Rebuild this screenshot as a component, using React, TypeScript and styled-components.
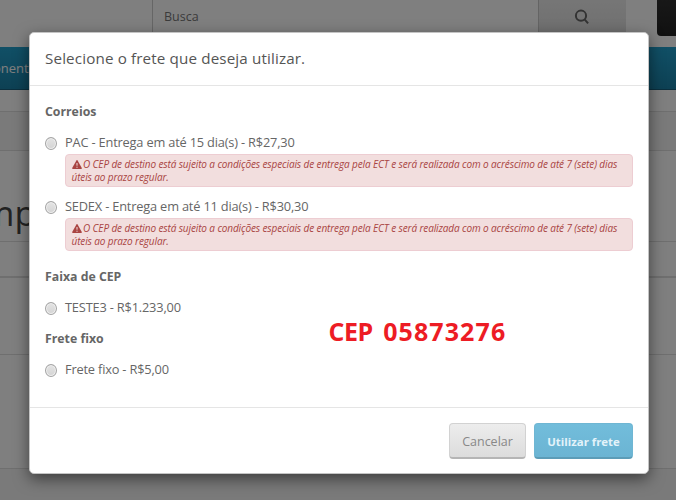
import React from 'react';
import styled, { createGlobalStyle } from 'styled-components';

const GlobalStyle = createGlobalStyle`
  * { box-sizing: border-box; }
  body { margin: 0; overflow: hidden; font-family: 'Open Sans', sans-serif; color: #666; }
`;

const Page = styled.div`
  position: relative;
  height: 500px;
  overflow: hidden;
  background: #fff;
`;

const TopBar = styled.div`
  display: flex;
  height: 47px;
  padding-left: 152px;
`;

const SearchField = styled.div`
  flex: none;
  width: 386px;
  height: 36px;
  padding: 7px 0 0 11px;
  border-left: 1px solid #ccc;
  font-size: 12.5px;
  line-height: 19px;
  color: #777;
`;

const SearchButton = styled.div`
  flex: none;
  width: 88px;
  height: 36px;
  padding: 9px 0 0 35px;
  border-left: 1px solid #c8c8c8;
  background: linear-gradient(#ededed, #dedede);
  line-height: 0;
`;

const CartButton = styled.div`
  flex: none;
  width: 50px;
  height: 36px;
  margin-left: 31px;
  border-radius: 0 0 0 4px;
  background: linear-gradient(#303030, #222);
`;

const Nav = styled.div`
  height: 43px;
  border-bottom: 1px solid #175f7c;
  background: linear-gradient(#22a0cd, #1b82a8);
  color: #fff;
  font-size: 13px;
  line-height: 43px;
`;

const NavLabel = styled.span`
  display: block;
  width: 29px;
  margin-left: -7px;
  white-space: nowrap;
`;

const Band = styled.div<{ $height: number; $shade?: string; $line?: number }>`
  height: ${p => p.$height}px;
  overflow: hidden;
  background: ${p => p.$shade ?? '#fff'};
  border-bottom: ${p => p.$line ?? 1}px solid #dedede;
`;

const PageTitle = styled.h1`
  margin: 39px 0 0 -18px;
  font-size: 35px;
  line-height: 46px;
  font-weight: 400;
  color: #444;
`;

const Backdrop = styled.div`
  position: absolute;
  inset: 0;
  background: rgba(0, 0, 0, 0.5);
`;

const Modal = styled.div`
  position: absolute;
  left: 29px;
  top: 32px;
  width: 620px;
  height: 442px;
  display: flex;
  flex-direction: column;
  border: 1px solid #c4c4c4;
  border-radius: 5px;
  background: #fff;
  box-shadow: 0 5px 15px rgba(0, 0, 0, 0.5);
`;

const ModalHeader = styled.header`
  height: 53px;
  padding: 14px 15px 0;
  border-bottom: 1px solid #e5e5e5;
`;

const ModalTitle = styled.h4`
  margin: 0;
  font-size: 15.2px;
  line-height: 22px;
  font-weight: 400;
  letter-spacing: 0.14px;
  color: #555;
`;

const ModalBody = styled.div`
  position: relative;
  height: 321px;
  padding: 16px 15px 0;
`;

const Group = styled.section<{ $height: number }>`
  height: ${p => p.$height}px;
`;

const GroupTitle = styled.div`
  height: 30px;
  font-size: 12.3px;
  line-height: 20px;
  font-weight: 700;
`;

const Option = styled.div<{ $height?: number }>`
  height: ${p => p.$height ?? 31}px;
`;

const OptionLabel = styled.label`
  display: flex;
  height: 20px;
  font-size: 12.8px;
  line-height: 20px;
  white-space: nowrap;
`;

const Radio = styled.span`
  flex: none;
  width: 12px;
  height: 13px;
  margin: 5px 8px 0 0;
  border: 1px solid #a4a4a4;
  border-radius: 50%;
  background: linear-gradient(#e4e4e4, #d4d4d4);
  box-shadow: inset 0 0 0 1px #eee;
`;

const Warning = styled.div`
  width: 568px;
  height: 33px;
  margin: 2px 0 0 20px;
  padding: 3px 5.5px 0;
  border: 1px solid #edcdd2;
  border-radius: 4px;
  background: #f2dede;
  color: #a94442;
  font-size: 10px;
  line-height: 12.5px;
  font-style: italic;
  white-space: nowrap;
`;

const WarningLine = styled.div`
  display: flex;
  align-items: center;
  gap: 1.5px;
  height: 12.5px;
`;

const Fit = styled.span<{ $spacing: number }>`
  letter-spacing: ${p => p.$spacing}px;
`;

const Annotation = styled.div`
  position: absolute;
  left: 298.5px;
  top: 228px;
  display: flex;
  gap: 10.5px;
  font-size: 25px;
  line-height: 34px;
  font-weight: 700;
  color: #ed1c24;
  white-space: nowrap;
`;

const ModalFooter = styled.footer`
  display: flex;
  flex: 1;
  justify-content: flex-end;
  gap: 8px;
  padding: 15px 15px 0;
  border-top: 1px solid #e5e5e5;
`;

const Button = styled.button<{ $primary?: boolean }>`
  width: ${p => (p.$primary ? 99 : 77)}px;
  height: 36px;
  padding: 1px 0 0;
  border: 1px solid ${p => (p.$primary ? '#6fb6d3' : '#d2d2d2')};
  border-bottom: 2px solid ${p => (p.$primary ? '#5c9cb7' : '#b5b5b5')};
  border-radius: 4px;
  background: ${p => (p.$primary ? 'linear-gradient(#72bddb, #6bb4d3)' : 'linear-gradient(#ededed, #dcdcdc)')};
  color: ${p => (p.$primary ? '#e3f3fa' : '#888')};
  font-family: 'Open Sans', sans-serif;
  font-size: ${p => (p.$primary ? 11.4 : 12.5)}px;
  font-weight: ${p => (p.$primary ? 700 : 400)};
  white-space: nowrap;
`;

const WarningIcon = () => (
  <svg width="10" height="9" viewBox="0 0 10 9">
    <path d="M4.4.5Q5-.4 5.6.5L9.8 8Q10 9 9.2 9H.8Q0 9 .2 8Z" fill="#a94442" />
    <path d="M5 3v2.7M5 6.7v1.1" stroke="#f2dede" strokeWidth="1" />
  </svg>
);

const DeliveryWarning = () => (
  <Warning>
    <WarningLine>
      <WarningIcon />
      <Fit $spacing={-0.115}>
        O CEP de destino está sujeito a condições especiais de entrega pela ECT e será realizada com o acréscimo de até 7 (sete) dias
      </Fit>
    </WarningLine>
    <WarningLine>
      <Fit $spacing={-0.12}>úteis ao prazo regular.</Fit>
    </WarningLine>
  </Warning>
);

const ShippingOption = ({ label, height, warned }: { label: string; height?: number; warned?: boolean }) => (
  <Option $height={height}>
    <OptionLabel>
      <Radio />
      <Fit $spacing={-0.18}>{label}</Fit>
    </OptionLabel>
    {warned && <DeliveryWarning />}
  </Option>
);

export default function App() {
  return (
    <Page>
      <GlobalStyle />
      <TopBar>
        <SearchField>Busca</SearchField>
        <SearchButton>
          <svg width="16" height="16" viewBox="0 0 16 16" fill="none" stroke="#666" strokeWidth="2">
            <circle cx="7" cy="6.7" r="5.1" />
            <path d="m10.8 10.6 3.3 3.7" />
          </svg>
        </SearchButton>
        <CartButton />
      </TopBar>
      <Nav><NavLabel>onentes</NavLabel></Nav>
      <Band $height={22} />
      <Band $height={39} $shade="#f5f5f5" />
      <Band $height={91}><PageTitle>mp</PageTitle></Band>
      <Band $height={36} $line={2} />
      <Band $height={77} />
      <Band $height={114} />
      <Band $height={40} $shade="#f5f5f5" />
      <Backdrop />
      <Modal>
        <ModalHeader>
          <ModalTitle>Selecione o frete que deseja utilizar.</ModalTitle>
        </ModalHeader>
        <ModalBody>
          <Group $height={165}>
            <GroupTitle>Correios</GroupTitle>
            <ShippingOption height={64} warned label="PAC - Entrega em até 15 dia(s) - R$27,30" />
            <ShippingOption warned label="SEDEX - Entrega em até 11 dia(s) - R$30,30" />
          </Group>
          <Group $height={62}>
            <GroupTitle>Faixa de CEP</GroupTitle>
            <ShippingOption label="TESTE3 - R$1.233,00" />
          </Group>
          <Group $height={62}>
            <GroupTitle>Frete fixo</GroupTitle>
            <ShippingOption label="Frete fixo - R$5,00" />
          </Group>
          <Annotation>
            <Fit $spacing={-0.5}>CEP</Fit>
            <Fit $spacing={1.1}>05873276</Fit>
          </Annotation>
        </ModalBody>
        <ModalFooter>
          <Button>Cancelar</Button>
          <Button $primary>Utilizar frete</Button>
        </ModalFooter>
      </Modal>
    </Page>
  );
}
